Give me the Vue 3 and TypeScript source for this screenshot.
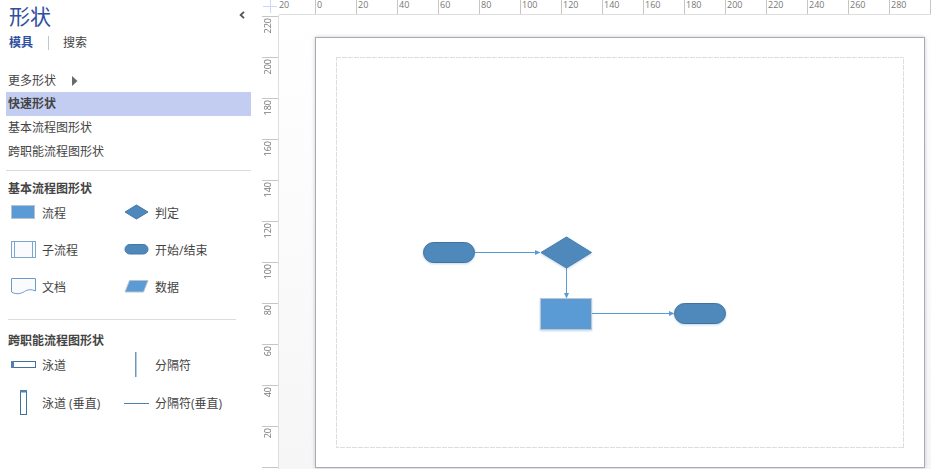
<script setup lang="ts">
import { ref } from 'vue'

type Glyph =
  | 'process' | 'decision' | 'subprocess' | 'terminator' | 'document' | 'data'
  | 'lane' | 'separator' | 'lane-vertical' | 'separator-vertical'

interface Stencil {
  title: string
  shapes: { label: string; glyph: Glyph }[]
}

const tabs = ['模具', '搜索']
const activeTab = ref('模具')

const categories = ['快速形状', '基本流程图形状', '跨职能流程图形状']
const activeCategory = ref('快速形状')

const stencils: Stencil[] = [
  {
    title: '基本流程图形状',
    shapes: [
      { label: '流程', glyph: 'process' },
      { label: '判定', glyph: 'decision' },
      { label: '子流程', glyph: 'subprocess' },
      { label: '开始/结束', glyph: 'terminator' },
      { label: '文档', glyph: 'document' },
      { label: '数据', glyph: 'data' },
    ],
  },
  {
    title: '跨职能流程图形状',
    shapes: [
      { label: '泳道', glyph: 'lane' },
      { label: '分隔符', glyph: 'separator' },
      { label: '泳道 (垂直)', glyph: 'lane-vertical' },
      { label: '分隔符(垂直)', glyph: 'separator-vertical' },
    ],
  },
]

const columnTicks = Array.from({ length: 16 }, (_, i) => (i - 1) * 20)
const rowTicks = Array.from({ length: 11 }, (_, i) => 220 - i * 20)
</script>

<template>
  <div class="app">
    <aside class="panel">
      <header class="panel-head">
        <h1>形状</h1>
        <button class="collapse" type="button" aria-label="折叠">
          <svg width="6" height="8" viewBox="0 0 6 8"><path d="M5 .8 1.6 4 5 7.2" fill="none" stroke="#555" stroke-width="1.8" /></svg>
        </button>
      </header>

      <nav class="tabs">
        <button
          v-for="tab in tabs"
          :key="tab"
          type="button"
          :class="{ active: tab === activeTab }"
          @click="activeTab = tab"
        >{{ tab }}</button>
      </nav>

      <div class="categories">
        <button type="button" class="more">
          更多形状
          <svg width="6" height="10" viewBox="0 0 6 10"><path d="M0 0 5.5 5 0 10z" fill="#6a6a6a" /></svg>
        </button>
        <button
          v-for="name in categories"
          :key="name"
          type="button"
          :class="{ active: name === activeCategory }"
          @click="activeCategory = name"
        >{{ name }}</button>
      </div>

      <section v-for="stencil in stencils" :key="stencil.title" class="stencil">
        <h2>{{ stencil.title }}</h2>
        <div class="shapes">
          <button v-for="shape in stencil.shapes" :key="shape.label" type="button">
            <svg width="28" height="28" viewBox="0 0 28 28" fill="none" stroke="#4d86b9">
              <rect v-if="shape.glyph === 'process'" x="2.5" y="6.5" width="23" height="13" fill="#5b9bd5" stroke="#b9c3cd" />
              <path v-else-if="shape.glyph === 'decision'" d="M14.5 6 26 13l-11.5 7L3 13z" fill="#4f88bb" stroke="#4279ab" />
              <g v-else-if="shape.glyph === 'subprocess'" stroke="#7ba6cf">
                <rect x="2.5" y="5.5" width="24" height="16" fill="#fafbfd" />
                <path d="M5.5 5.5v16M23.5 5.5v16" />
              </g>
              <rect v-else-if="shape.glyph === 'terminator'" x="3" y="8.5" width="23" height="9.5" rx="4.75" fill="#4f88bb" stroke="#4279ab" />
              <path v-else-if="shape.glyph === 'document'" d="M2.5 5.5h24V18c-4-2-8-1.500-11 .5s-8 3.500-13 .5z" fill="#fafbfd" stroke="#6b9bc8" />
              <path v-else-if="shape.glyph === 'data'" d="M7.5 7.5H26L21.5 19H3z" fill="#5b9bd5" stroke="#b9c3cd" />
              <g v-else-if="shape.glyph === 'lane'" stroke="#41719c">
                <rect x="2.5" y="10.5" width="24" height="6" />
                <path d="M2 10h3v7H2z" fill="#4f82b2" stroke="none" />
              </g>
              <g v-else-if="shape.glyph === 'separator'">
                <path d="M13.5 1v25" stroke="#6f97bd" />
                <path d="M14.5 1v25" stroke="#b4cbe0" />
              </g>
              <g v-else-if="shape.glyph === 'lane-vertical'" stroke="#41719c">
                <rect x="11.5" y="1.5" width="6" height="24" />
                <path d="M11 1h7v2.5h-7z" fill="#4f82b2" stroke="none" />
              </g>
              <path v-else d="M2 14.5h25" stroke="#4f7fad" />
            </svg>
            <span>{{ shape.label }}</span>
          </button>
        </div>
      </section>
    </aside>

    <main class="workspace">
      <div class="corner">
        <svg width="16" height="14" viewBox="0 0 16 14"><path d="M1 6.500h14M8.500 0v13" stroke="#cdd5fa" /></svg>
      </div>
      <div class="ruler ruler-x">
        <div v-for="tick in columnTicks" :key="tick"><span>{{ tick }}</span></div>
        <div class="end"></div>
      </div>
      <div class="ruler ruler-y">
        <div v-for="tick in rowTicks" :key="tick"><span>{{ tick }}</span></div>
        <div class="end"></div>
      </div>
      <div class="canvas">
        <div class="page">
          <svg class="margin" aria-hidden="true">
            <rect x="0" y="0" width="100%" height="100%" fill="none" stroke="#dedede" stroke-width="2" stroke-dasharray="5 1" />
          </svg>
          <svg class="diagram" width="608" height="429" viewBox="0 0 608 429">
            <g fill="none" stroke="#5b9bd5">
              <path d="M159 214.500h62" />
              <path d="M250.500 230v26" />
              <path d="M276 275.500h78" />
            </g>
            <g fill="#5b9bd5">
              <path d="M219 212v5l5.500-2.500z" />
              <path d="M248 255h5l-2.500 5.500z" />
              <path d="M353 273v5l5.500-2.500z" />
            </g>
            <g class="nodes" fill="#4f88bb" stroke="#41719c">
              <rect x="107.500" y="204.500" width="51" height="20" rx="10" />
              <path d="M250.500 199 275.500 214.500 250.500 230 225 214.500z" stroke="#4a7fb0" />
              <rect x="224.500" y="260.500" width="51" height="31" fill="#5b9bd5" stroke="#bfc5cb" />
              <rect x="358.500" y="265.500" width="51" height="20" rx="10" />
            </g>
          </svg>
        </div>
      </div>
    </main>
  </div>
</template>

<style>
body {
  margin: 0;
}
</style>

<style scoped>
.app {
  display: grid;
  grid-template-columns: 262px 1fr;
  height: 100vh;
  overflow: hidden;
  background: #fff;
  color: #444;
  font: 12px/24px "Open Sans", "Noto Sans CJK SC", sans-serif;
}

button {
  margin: 0;
  padding: 0;
  border: 0;
  background: none;
  color: inherit;
  font: inherit;
  text-align: left;
  cursor: pointer;
}

svg {
  display: block;
  flex: none;
}

h1,
h2 {
  margin: 0;
}

.panel {
  padding: 0 11px 0 6px;
}

.panel-head {
  display: flex;
  justify-content: space-between;
  padding: 0 6px 0 3px;
}

h1 {
  color: #2f4fa0;
  font-size: 21px;
  font-weight: 400;
  line-height: 32px;
}

.collapse {
  align-self: flex-start;
  padding-top: 11px;
}

.tabs {
  display: flex;
  padding: 4px 3px 0;
}

.tabs button {
  line-height: 14px;
}

.tabs button + button {
  margin-left: 15px;
  padding-left: 14px;
  border-left: 1px solid #c6c6c6;
}

.tabs .active {
  color: #2f4fa0;
  font-weight: 700;
}

.categories {
  display: flex;
  flex-direction: column;
  padding: 18px 0 6px;
}

.categories button {
  padding-left: 2px;
}

.categories .more {
  display: flex;
  align-items: center;
  gap: 16px;
  padding-top: 2px;
  line-height: 22px;
}

.categories .active {
  background: #c2cdf1;
  font-weight: 700;
}

.stencil {
  padding: 7px 0 18px 2px;
  border-top: 1px solid #dcdcdc;
}

.stencil + .stencil {
  margin: 0 15px 0 2px;
  padding: 10px 0 0;
}

h2 {
  font-size: 12px;
  font-weight: 700;
  line-height: 21px;
}

.shapes {
  display: grid;
  grid-template-columns: 113px 1fr;
  row-gap: 9px;
  padding-left: 1px;
}

.stencil + .stencil .shapes {
  row-gap: 10px;
}

.shapes button {
  display: flex;
  align-items: center;
  gap: 5px;
  height: 28px;
  white-space: nowrap;
}

.shapes span {
  padding-top: 2px;
}

.workspace {
  display: grid;
  grid-template: 15px minmax(0, 1fr) / 17px minmax(0, 1fr);
  min-width: 0;
  min-height: 0;
}

.corner {
  z-index: 1;
  background: #fff;
}

.ruler {
  display: flex;
  min-width: 0;
  min-height: 0;
  color: #777;
  font-size: 9px;
  line-height: 9px;
}

.ruler div {
  box-sizing: border-box;
  display: flex;
  flex: none;
  align-items: flex-start;
}

.ruler-x {
  border-bottom: 1px solid #dedede;
}

.ruler-x div {
  width: 41px;
  padding-left: 1px;
  border-left: 1px solid #c6c6c6;
}

.ruler-x div:first-child {
  margin-left: -5px;
}

.ruler-x .end {
  width: 1px;
  padding: 0;
}

.ruler-y {
  flex-direction: column;
  padding-top: 1px;
  border-right: 1px solid #dedede;
}

.ruler-y div {
  height: 41px;
  padding: 1px 0 0 1px;
  border-top: 1px solid #c6c6c6;
}

.ruler-y .end {
  height: 1px;
  padding: 0;
}

.ruler-y span {
  writing-mode: vertical-rl;
  transform: rotate(180deg);
}

.canvas {
  display: flex;
  min-width: 0;
  padding: 22px 6px 1px 36px;
  background: linear-gradient(#fff, #f6f6f7);
}

.page {
  position: relative;
  display: flex;
  flex: 1;
  min-width: 0;
  padding: 19px 20px;
  border: 1px solid #a6abb5;
  background: #fff;
  box-shadow: 0 0 4px rgba(0, 0, 0, 0.2);
}

.margin {
  flex: 1;
  width: 100%;
  min-width: 0;
  height: 100%;
}

.diagram {
  position: absolute;
  top: 0;
  left: 0;
}

.nodes {
  filter: drop-shadow(0 1px 1px rgba(91, 155, 213, 0.4));
}
</style>
